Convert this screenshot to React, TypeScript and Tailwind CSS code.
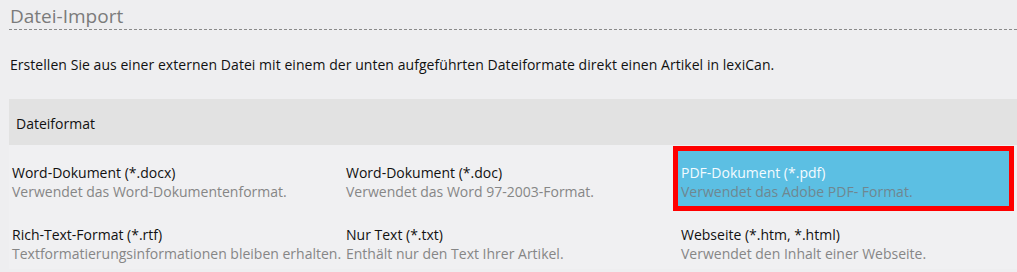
import React from "react";

const rows = [
  [
    { t: "Word-Dokument (*.docx)", d: "Verwendet das Word-Dokumentenformat." },
    { t: "Word-Dokument (*.doc)", d: "Verwendet das Word 97-2003-Format." },
    { t: "PDF-Dokument (*.pdf)", d: "Verwendet das Adobe PDF- Format.", sel: true },
  ],
  [
    { t: "Rich-Text-Format (*.rtf)", d: "Textformatierungsinformationen bleiben erhalten." },
    { t: "Nur Text (*.txt)", d: "Enthält nur den Text Ihrer Artikel." },
    { t: "Webseite (*.htm, *.html)", d: "Verwendet den Inhalt einer Webseite." },
  ],
];

export default function App() {
  return (
    <div
      className="w-[1017px] h-[272px] overflow-hidden bg-[#eeeef0] text-[#111]"
      style={{ fontFamily: "'Open Sans', 'Noto Sans', sans-serif" }}
    >
      <div className="pt-[4px] pl-[10px] text-[19px] leading-[24px] text-[#7b7b7b]">Datei-Import</div>
      <div className="ml-[9px] mt-[1px] h-[1px] bg-[linear-gradient(to_right,#8a8a8a_3px,transparent_3px)] bg-[length:5px_1px]" />
      <p className="mt-[25px] pl-[10px] text-[14px] leading-[20px] tracking-[0.05px]">
        Erstellen Sie aus einer externen Datei mit einem der unten aufgeführten Dateiformate direkt einen Artikel in lexiCan.
      </p>
      <div className="ml-[9px] mt-[24px] bg-[#f0f0f2]">
        <div className="h-[46px] bg-[#e2e2e2] pt-[15px] pl-[7px] text-[14px] leading-[20px]">Dateiformat</div>
        {rows.map((row, i) => (
          <div key={i} className="grid grid-cols-[334px_335px_1fr] h-[62px]">
            {row.map((c, j) =>
              c.sel ? (
                <div key={j} className="pt-[6px]">
                  <div className="relative w-[331px] h-[55px] bg-[#5cbfe3] pt-[12px] pl-[3px] text-[14px] leading-[19px]">
                    <div className="text-[#f4fbff]">{c.t}</div>
                    <div className="text-[#6f8791]">{c.d}</div>
                    <div className="absolute -inset-[5px] border-[5px] border-[#ff0000]" />
                  </div>
                </div>
              ) : (
                <div key={j} className="pt-[18px] pl-[3px] text-[14px] leading-[19px] whitespace-nowrap">
                  <div className="text-[#111]">{c.t}</div>
                  <div className="text-[#868686]">{c.d}</div>
                </div>
              )
            )}
          </div>
        ))}
      </div>
    </div>
  );
}
